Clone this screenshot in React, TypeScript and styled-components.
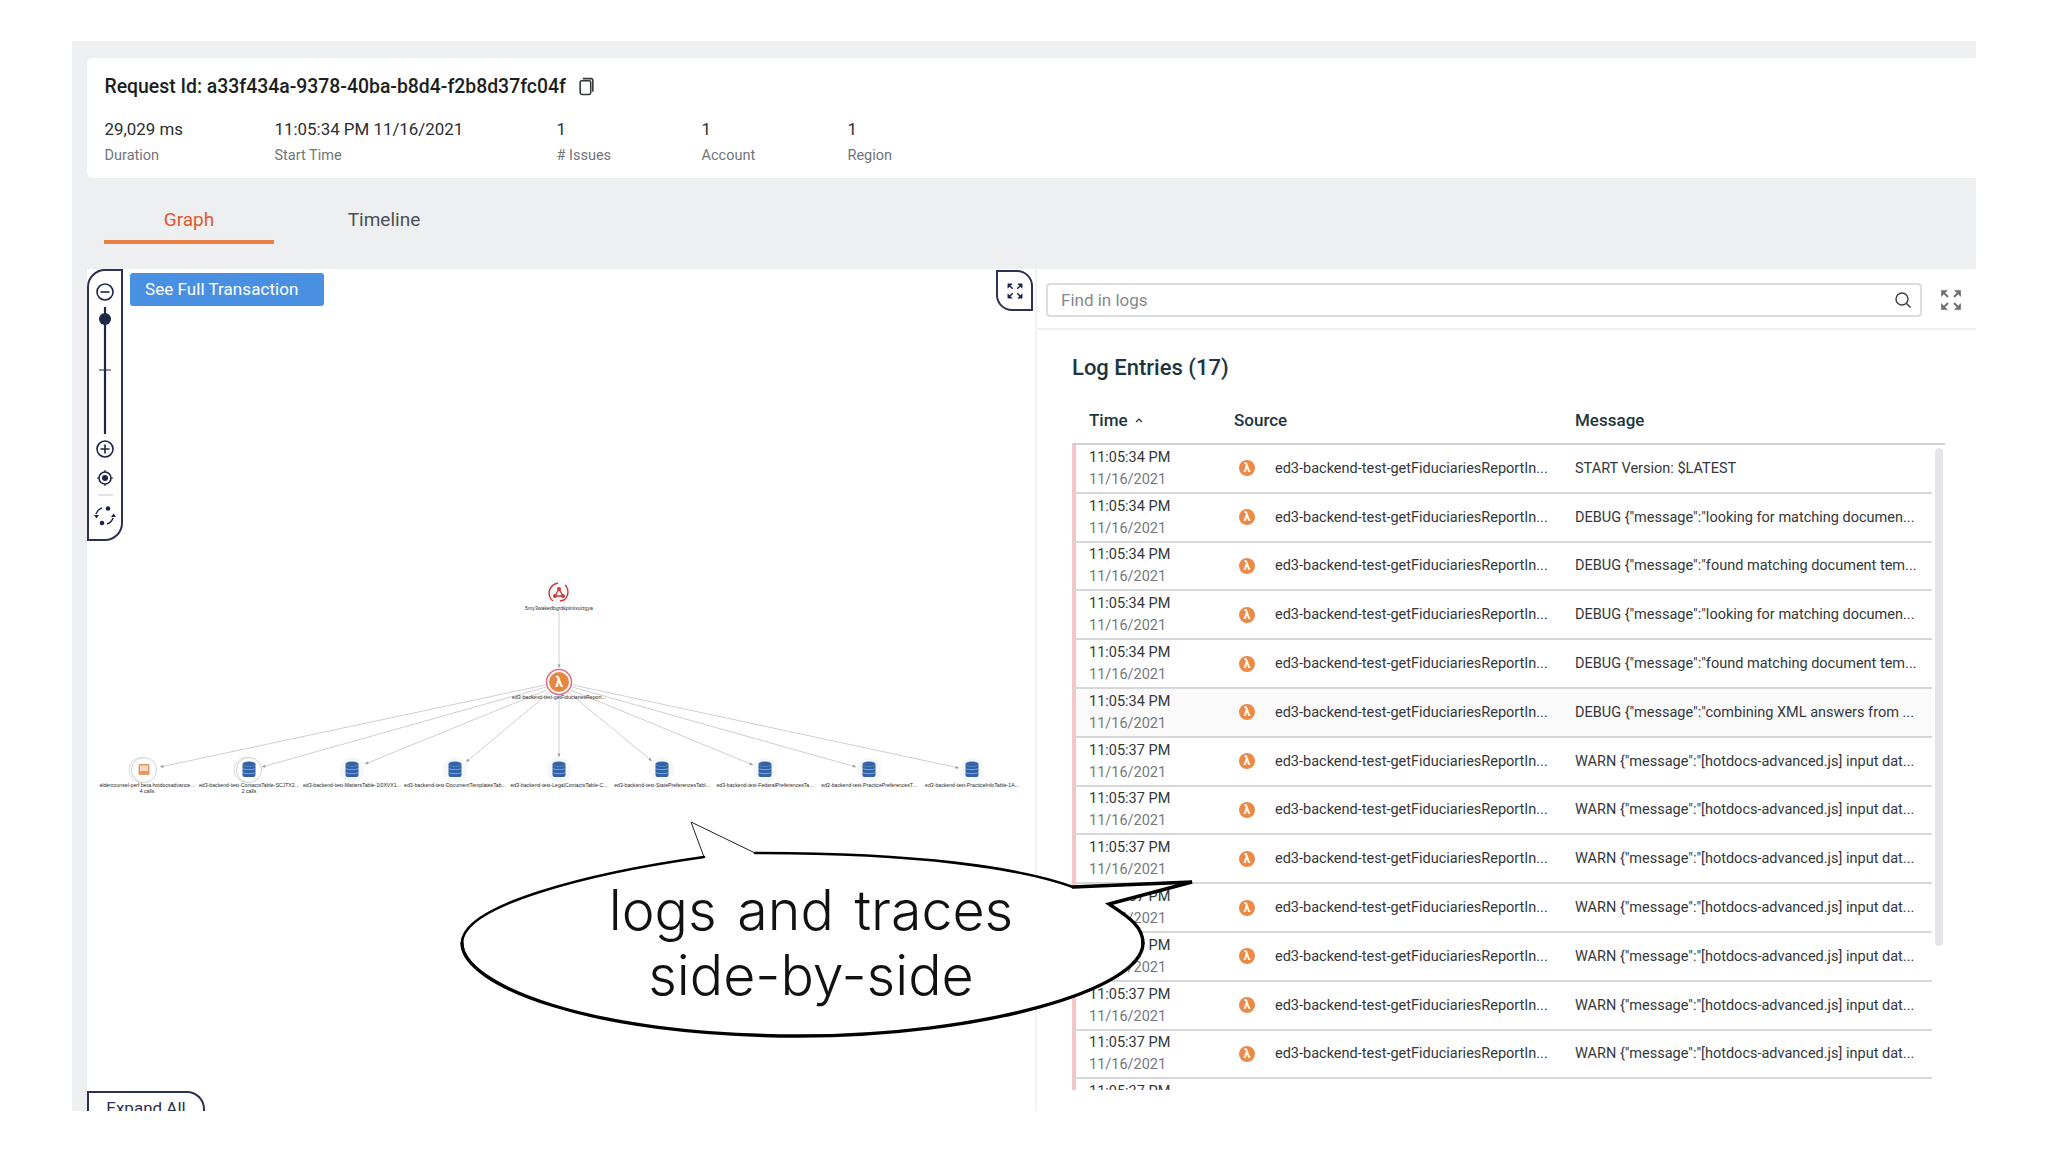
import React from "react";
import styled, { createGlobalStyle } from "styled-components";

const GlobalStyle = createGlobalStyle`
  html, body { margin: 0; padding: 0; background: #fff; }
  body { font-family: Roboto, "Liberation Sans", sans-serif; color: #2b2f33; }
  * { box-sizing: border-box; }
`;

const navy = "#2b3154";

const Page = styled.div`
  width: 2048px;
  height: 1152px;
  padding: 41px 72px 41px 72px;
`;

const Frame = styled.div`
  position: relative;
  width: 100%;
  height: 100%;
  background: #eeeff1;
  padding: 17px 0 0 15px;
  display: flex;
  flex-direction: column;
  overflow: hidden;
`;

const Card = styled.section`
  height: 120px;
  background: #fff;
  border-radius: 6px 0 0 6px;
  padding: 16px 0 0 17.5px;
`;

const Title = styled.div`
  display: flex;
  align-items: center;
  gap: 12px;
  height: 24px;
  font-size: 19.4px;
  font-weight: 500;
  color: #1c1f22;
  svg {
    flex: none;
  }
`;

const Stats = styled.div`
  display: flex;
  margin-top: 19px;
`;

const Stat = styled.div<{ $w: number }>`
  width: ${(p) => p.$w}px;
  span {
    display: block;
    height: 29px;
    line-height: 24px;
    font-size: 16.9px;
    color: #2b2f33;
  }
  small {
    display: block;
    font-size: 14.5px;
    line-height: 20px;
    color: #70757a;
  }
`;

const Tabs = styled.nav`
  display: flex;
  margin: 22px 0 25px 17px;
`;

const Tab = styled.div<{ $w: number; $active?: boolean }>`
  width: ${(p) => p.$w}px;
  height: 44px;
  line-height: 40px;
  text-align: center;
  font-size: 19px;
  color: ${(p) => (p.$active ? "#e2592c" : "#4a4f55")};
  border-bottom: 4px solid ${(p) => (p.$active ? "#e87f45" : "transparent")};
`;

const Main = styled.main`
  flex: 1;
  min-height: 0;
  display: flex;
  background: #fff;
`;

const GraphPanel = styled.div`
  position: relative;
  width: 948px;
  flex: none;
  overflow: hidden;
`;

const GraphCanvas = styled.svg`
  position: absolute;
  inset: 0;
  display: block;
`;

const NodeLabel = styled.text`
  font-family: "Liberation Sans", sans-serif;
  font-size: 5.2px;
  fill: #2a2a2a;
  text-anchor: middle;
`;

const ZoomBar = styled.div`
  position: absolute;
  left: 0;
  top: 0;
  width: 36px;
  height: 272px;
  border: 2px solid ${navy};
  border-radius: 18px 0 18px 0;
  background: #fff;
`;

const TransactionButton = styled.button`
  position: absolute;
  left: 43px;
  top: 4px;
  width: 194px;
  height: 33px;
  border: 0;
  border-radius: 3px;
  background: #4a90e2;
  color: #fff;
  font: 400 17px Roboto, sans-serif;
  letter-spacing: 0.05px;
  text-align: left;
  padding: 0 0 2px 15px;
`;

const CornerButton = styled.div`
  position: absolute;
  right: 2px;
  top: 1px;
  width: 37px;
  height: 41px;
  border: 2px solid ${navy};
  border-radius: 0 16px 0 16px;
  background: #fff;
  display: flex;
  align-items: center;
  justify-content: center;
`;

const ExpandAll = styled.div`
  position: absolute;
  left: 0;
  bottom: -21px;
  width: 118px;
  height: 41px;
  border: 2px solid ${navy};
  border-bottom: 0;
  border-radius: 0 18px 0 0;
  background: #fff;
  color: #2b3154;
  font-size: 17px;
  line-height: 31px;
  text-align: center;
`;

const LogPanel = styled.div`
  flex: 1;
  min-width: 0;
  border-left: 2px solid #f1f1f3;
  display: flex;
  flex-direction: column;
`;

const SearchRow = styled.div`
  height: 61px;
  flex: none;
  display: flex;
  align-items: center;
  padding: 3px 0 0 9px;
  border-bottom: 2px solid #f0f0f2;
`;

const SearchBox = styled.div`
  width: 876px;
  height: 34px;
  border: 2px solid #dcdde0;
  border-radius: 4px;
  display: flex;
  align-items: center;
  justify-content: space-between;
  padding: 0 8px 0 13px;
  font-size: 17px;
  color: #85898e;
`;

const LogBody = styled.div`
  flex: 1;
  min-height: 0;
  padding-left: 35px;
  display: flex;
  flex-direction: column;
`;

const LogTitle = styled.h2`
  margin: 25px 0 0;
  height: 26px;
  line-height: 26px;
  font-size: 22px;
  font-weight: 500;
  color: #1d3540;
`;

const HeadRow = styled.div`
  width: 873px;
  height: 64px;
  flex: none;
  display: grid;
  grid-template-columns: 162px 341px 1fr;
  align-items: center;
  padding-top: 15px;
  border-bottom: 2px solid #d0d1d5;
  font-size: 17px;
  font-weight: 500;
  color: #1d3540;
`;

const HeadCell = styled.div`
  display: flex;
  align-items: center;
  gap: 7px;
  &:first-child {
    padding-left: 17px;
  }
`;

const LogList = styled.div`
  position: relative;
  width: 873px;
  height: 645px;
  flex: none;
  overflow: hidden;
`;

const ScrollThumb = styled.div`
  position: absolute;
  right: 2px;
  top: 3px;
  width: 8px;
  height: 498px;
  border-radius: 4px;
  background: #e6e6ea;
`;

const Row = styled.div<{ $shade?: boolean }>`
  width: 860px;
  height: 48.8px;
  display: grid;
  grid-template-columns: 158px 341px 1fr;
  align-items: center;
  border-left: 4px solid #f6c6c6;
  border-bottom: 2px solid #d6d7db;
  background: ${(p) => (p.$shade ? "#fafafb" : "#fff")};
`;

const TimeCell = styled.div`
  padding: 1px 0 0 13px;
  font-size: 14.5px;
  line-height: 22px;
  span {
    display: block;
    color: #33373b;
  }
  small {
    display: block;
    font-size: 14.5px;
    color: #74787d;
  }
`;

const SourceCell = styled.div`
  display: flex;
  align-items: center;
  gap: 20px;
  padding-left: 5px;
  font-size: 14.5px;
  color: #33373b;
  white-space: nowrap;
`;

const Lambda = styled.span`
  width: 16px;
  height: 16px;
  flex: none;
  border-radius: 50%;
  background: #e98a49;
  color: #fff;
  font-size: 12px;
  font-weight: 700;
  line-height: 16px;
  text-align: center;
`;

const MessageCell = styled.div`
  font-size: 14.5px;
  color: #33373b;
  white-space: nowrap;
`;

const Callout = styled.div`
  position: absolute;
  left: 385px;
  top: 776px;
  width: 740px;
  height: 224px;
`;

const CalloutDrawing = styled.svg`
  position: absolute;
  inset: 0;
  display: block;
`;

const CalloutText = styled.div`
  position: absolute;
  inset: 60px 32px 0 0;
  text-align: center;
  font-family: Inter, sans-serif;
  font-weight: 300;
  font-size: 55.5px;
  line-height: 65px;
  word-spacing: 5px;
  color: #111;
`;

const ExpandIcon = ({ color, size = 20 }: { color: string; size?: number }) => (
  <svg width={size} height={size} viewBox="0 0 20 20" fill={color} stroke={color} strokeWidth="1.6">
    <path d="M2 2h5L2 7z" strokeWidth="0.5" />
    <path d="M3.5 3.5L7.5 7.5" />
    <path d="M18 2h-5l5 5z" strokeWidth="0.5" />
    <path d="M16.5 3.5L12.5 7.5" />
    <path d="M2 18h5l-5-5z" strokeWidth="0.5" />
    <path d="M3.5 16.5L7.5 12.5" />
    <path d="M18 18h-5l5-5z" strokeWidth="0.5" />
    <path d="M16.5 16.5L12.5 12.5" />
  </svg>
);

const ZoomControls = () => (
  <svg width="32" height="268" viewBox="89 271 32 268" fill="none" stroke="#1d2548" strokeWidth="1.6">
    <circle cx="105" cy="292" r="8" />
    <path d="M100.5 292h9" />
    <path d="M105 307V434" strokeWidth="2.2" />
    <circle cx="105" cy="319" r="6" fill="#1d2548" stroke="none" />
    <path d="M99 370h12" strokeWidth="1" />
    <circle cx="105" cy="449" r="8" />
    <path d="M100.5 449h9M105 444.500v9" />
    <circle cx="105" cy="478" r="6" />
    <circle cx="105" cy="478" r="3" fill="#1d2548" stroke="none" />
    <path d="M105 470v2M105 484v2M97 478h2M111 478h2" strokeWidth="1.2" />
    <path d="M98 495h15" stroke="#dcdde0" />
    <circle cx="108" cy="508.500" r="2.300" fill="#1d2548" stroke="none" />
    <circle cx="102" cy="523" r="2.300" fill="#1d2548" stroke="none" />
    <path d="M96 514c1-3 3-5 6-6M113 518c-1 3-3 5-6 6" />
    <path d="M94 515l5 0-2.500 3.500zM116 517l-5 0 2.500-3.500z" fill="#1d2548" stroke="none" />
  </svg>
);

const edgeEnds = [
  [545, 685, 160, 767],
  [546, 687, 262, 767],
  [547, 690, 365, 764],
  [550, 692, 466, 762],
  [559, 695, 559, 757],
  [568, 692, 652, 761],
  [571, 690, 753, 765],
  [572, 687, 856, 767],
  [573, 685, 959, 768],
];

const leaves = [
  { x: 144, labelX: 147, kind: "box", label: "eldercounsel-perf.beta.hotdocsadvance...", calls: "4 calls" },
  { x: 249, labelX: 249, kind: "db", label: "ed3-backend-test-ContactsTable-SCJTX2...", calls: "2 calls" },
  { x: 352, labelX: 352, kind: "db", label: "ed3-backend-test-MattersTable-1I0XVX1..." },
  { x: 455, labelX: 455, kind: "db", label: "ed3-backend-test-DocumentTemplatesTab..." },
  { x: 559, labelX: 559, kind: "db", label: "ed3-backend-test-LegalContactsTable-C..." },
  { x: 662, labelX: 662, kind: "db", label: "ed3-backend-test-StatePreferencesTabl..." },
  { x: 765, labelX: 765, kind: "db", label: "ed3-backend-test-FederalPreferencesTa..." },
  { x: 869, labelX: 869, kind: "db", label: "ed3-backend-test-PracticePreferencesT..." },
  { x: 972, labelX: 972, kind: "db", label: "ed3-backend-test-PracticeInfoTable-1A..." },
];

const Arrow = ({ x1, y1, x2, y2 }: { x1: number; y1: number; x2: number; y2: number }) => {
  const a = Math.atan2(y2 - y1, x2 - x1);
  const p = (d: number, o: number) =>
    `${x2 - d * Math.cos(a) - o * Math.sin(a)},${y2 - d * Math.sin(a) + o * Math.cos(a)}`;
  return (
    <g>
      <line x1={x1} y1={y1} x2={x2} y2={y2} stroke="#c9cacc" strokeWidth="0.9" />
      <polygon points={`${x2},${y2} ${p(3.500, 1.500)} ${p(3.500, -1.500)}`} fill="#9b9da0" />
    </g>
  );
};

const Database = ({ x }: { x: number }) => (
  <g>
    <rect x={x - 6.500} y={763} width="13" height="14" rx="2" fill="#2f62a6" />
    <ellipse cx={x} cy={764} rx="6.500" ry="2.500" fill="#2f62a6" stroke="#9db6d6" strokeWidth="0.4" />
    <path
      d={`M${x - 6.500} 768.500c2 1.500 11 1.500 13 0M${x - 6.500} 772.500c2 1.500 11 1.500 13 0`}
      stroke="#a9c0dc"
      strokeWidth="0.7"
      fill="none"
    />
  </g>
);

const Graph = () => (
  <GraphCanvas width="948" height="842" viewBox="87 269 948 842">
    <line x1="559" y1="612" x2="559" y2="667" stroke="#c9cacc" strokeWidth="0.9" />
    <polygon points="559,668 557.500,664.500 560.500,664.500" fill="#9b9da0" />
    {edgeEnds.map(([x1, y1, x2, y2]) => (
      <Arrow key={x2} x1={x1} y1={y1} x2={x2} y2={y2} />
    ))}

    <circle cx="559" cy="593" r="13" fill="#f7f8f9" />
    <g fill="none" stroke="#cf3a3a" strokeWidth="1.400">
      <path d="M553 601a10 10 0 0 1 2-17l3-1M565 585a10 10 0 0 1-1 15l-4 1" />
      <path d="M559 589l-4 7h8z" />
      <circle cx="559" cy="589" r="1.300" fill="#cf3a3a" />
      <circle cx="555" cy="596" r="1.300" fill="#cf3a3a" />
      <circle cx="563" cy="596" r="1.300" fill="#cf3a3a" />
    </g>
    <NodeLabel x="559" y="610">5my3wakedbgrdkpimixuizgya</NodeLabel>

    <circle cx="559" cy="682" r="12.500" fill="#fff" stroke="#dc6a85" strokeWidth="1.500" />
    <circle cx="559" cy="682" r="10" fill="#e6873f" />
    <text
      x="559"
      y="687"
      textAnchor="middle"
      fill="#fff"
      fontSize="14"
      fontWeight="700"
      fontFamily="Roboto, sans-serif"
    >
      λ
    </text>
    <NodeLabel x="559" y="699">ed3-backend-test-getFiduciariesReport...</NodeLabel>

    {leaves.map((leaf) => (
      <g key={leaf.x}>
        <circle cx={leaf.x} cy="770" r="12.500" fill="#f5f7f9" />
        {leaf.calls && (
          <>
            <circle cx={leaf.x - 2.500} cy="770" r="12.500" fill="#fff" stroke="#cfcfd1" strokeWidth="0.8" />
            <circle cx={leaf.x} cy="770" r="12.500" fill="#fff" stroke="#c5c5c8" strokeWidth="0.8" />
          </>
        )}
        {leaf.kind === "db" ? (
          <Database x={leaf.x} />
        ) : (
          <g>
            <rect x={leaf.x - 5.500} y="764" width="11" height="11" rx="1" fill="#e59a66" />
            <rect x={leaf.x - 4} y="765.500" width="8" height="5.500" fill="#f5d6bf" />
          </g>
        )}
        <NodeLabel x={leaf.labelX} y="787">{leaf.label}</NodeLabel>
        {leaf.calls && <NodeLabel x={leaf.labelX} y="793">{leaf.calls}</NodeLabel>}
      </g>
    ))}
  </GraphCanvas>
);

const logs = [
  { t: "11:05:34 PM", m: "START Version: $LATEST" },
  { t: "11:05:34 PM", m: 'DEBUG {"message":"looking for matching documen...' },
  { t: "11:05:34 PM", m: 'DEBUG {"message":"found matching document tem...' },
  { t: "11:05:34 PM", m: 'DEBUG {"message":"looking for matching documen...' },
  { t: "11:05:34 PM", m: 'DEBUG {"message":"found matching document tem...' },
  { t: "11:05:34 PM", m: 'DEBUG {"message":"combining XML answers from ...', shade: true },
  ...Array.from({ length: 8 }, () => ({
    t: "11:05:37 PM",
    m: 'WARN {"message":"[hotdocs-advanced.js] input dat...',
  })),
];

const stats = [
  { w: 170, value: "29,029 ms", label: "Duration" },
  { w: 282, value: "11:05:34 PM 11/16/2021", label: "Start Time" },
  { w: 145, value: "1", label: "# Issues" },
  { w: 146, value: "1", label: "Account" },
  { w: 146, value: "1", label: "Region" },
];

const App = () => (
  <Page>
    <GlobalStyle />
    <Frame>
      <Card>
        <Title>
          Request Id: a33f434a-9378-40ba-b8d4-f2b8d37fc04f
          <svg width="17" height="19" viewBox="0 0 16 18" fill="none" stroke="#33373b" strokeWidth="1.500">
            <rect x="2" y="3.500" width="10" height="13" rx="1.500" />
            <path d="M4.500 1.500h8a1.500 1.500 0 0 1 1.500 1.500v11" />
          </svg>
        </Title>
        <Stats>
          {stats.map((s) => (
            <Stat key={s.label} $w={s.w}>
              <span>{s.value}</span>
              <small>{s.label}</small>
            </Stat>
          ))}
        </Stats>
      </Card>

      <Tabs>
        <Tab $w={170} $active>
          Graph
        </Tab>
        <Tab $w={220}>Timeline</Tab>
      </Tabs>

      <Main>
        <GraphPanel>
          <Graph />
          <ZoomBar>
            <ZoomControls />
          </ZoomBar>
          <TransactionButton>See Full Transaction</TransactionButton>
          <CornerButton>
            <ExpandIcon color="#1d2548" size={18} />
          </CornerButton>
          <ExpandAll>Expand All</ExpandAll>
        </GraphPanel>

        <LogPanel>
          <SearchRow>
            <SearchBox>
              Find in logs
              <svg width="18" height="18" viewBox="0 0 18 18" fill="none" stroke="#3a3e42" strokeWidth="1.400">
                <circle cx="8" cy="8" r="6" />
                <path d="M12.500 12.500L16.500 16.500" />
              </svg>
            </SearchBox>
            <span style={{ width: 17 }} />
            <ExpandIcon color="#6e7277" size={24} />
          </SearchRow>
          <LogBody>
            <LogTitle>Log Entries (17)</LogTitle>
            <HeadRow>
              <HeadCell>
                Time
                <svg width="8" height="6" viewBox="0 0 8 6" fill="none" stroke="#1d3540" strokeWidth="1.200">
                  <path d="M1 5l3-3 3 3" />
                </svg>
              </HeadCell>
              <HeadCell>Source</HeadCell>
              <HeadCell>Message</HeadCell>
            </HeadRow>
            <LogList>
              {logs.map((log, i) => (
                <Row key={i} $shade={log.shade}>
                  <TimeCell>
                    <span>{log.t}</span>
                    <small>11/16/2021</small>
                  </TimeCell>
                  <SourceCell>
                    <Lambda>λ</Lambda>
                    ed3-backend-test-getFiduciariesReportIn...
                  </SourceCell>
                  <MessageCell>{log.m}</MessageCell>
                </Row>
              ))}
              <ScrollThumb />
            </LogList>
          </LogBody>
        </LogPanel>
      </Main>

      <Callout>
        <CalloutDrawing width="740" height="224" viewBox="457 817 740 224" fill="none" stroke="#000" strokeLinecap="round">
          <path
            d="M704 857C590 873 462 905 462 943C462 985 590 1036 799 1036C980 1036 1143 990 1143 943C1143 925 1125 915 1109 904L1192 882L1073 887C1020 868 920 853 755 853L691 822Z"
            fill="#fff"
            stroke="none"
          />
          <path d="M704 857L691 822L755 853" stroke="#222" strokeWidth="1" />
          <path d="M704 857C590 873 462 905 462 943" strokeWidth="2.600" />
          <path d="M462 943C462 985 590 1036 799 1036C980 1036 1143 990 1143 943" strokeWidth="3.400" />
          <path d="M1143 943C1143 925 1125 915 1109 904L1192 882L1073 887" strokeWidth="3.400" />
          <path d="M1073 887C1020 868 920 853 755 853" strokeWidth="2.600" />
        </CalloutDrawing>
        <CalloutText>
          logs and traces
          <br />
          side-by-side
        </CalloutText>
      </Callout>
    </Frame>
  </Page>
);

export default App;
